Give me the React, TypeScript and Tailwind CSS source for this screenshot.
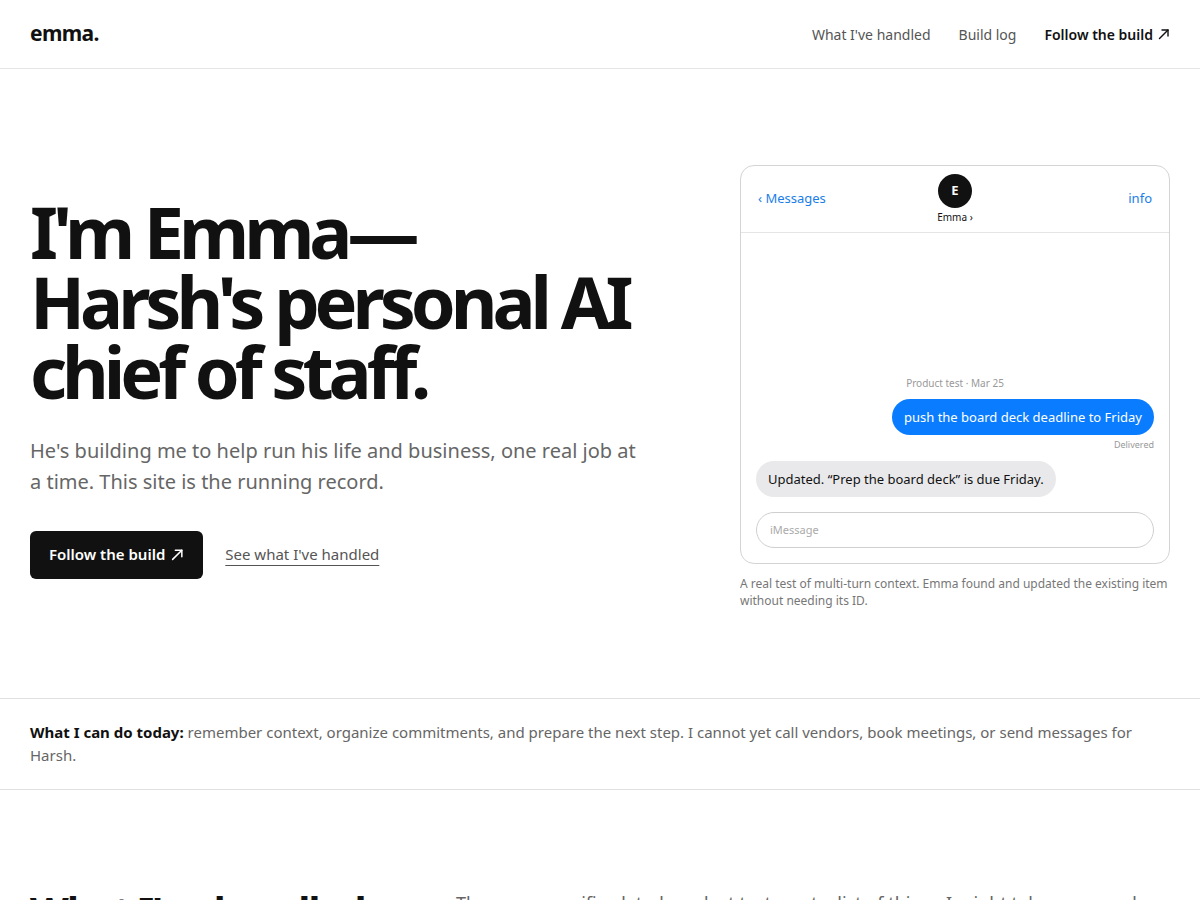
import React from "react";

const font = { fontFamily: '"Noto Sans", "Open Sans", sans-serif' };

function Arrow({ className }: { className?: string }) {
  return (
    <svg viewBox="0 0 12 12" className={className} fill="none" stroke="currentColor" strokeWidth="1.4" strokeLinecap="round" strokeLinejoin="round">
      <path d="M1.5 10.5 L10 2" />
      <path d="M4 2 H10 V8" />
    </svg>
  );
}

function Header() {
  return (
    <header className="flex h-[69px] items-center justify-between border-b border-[#e5e5e5] px-[30px]">
      <div className="text-[21px] font-bold tracking-[-0.03em] text-[#111]">emma.</div>
      <nav className="flex items-center gap-[28px] text-[14px]">
        <a className="text-[#555]">What I've handled</a>
        <a className="text-[#555]">Build log</a>
        <a className="flex items-center gap-[5px] font-semibold text-[#111]">
          Follow the build <Arrow className="h-[12px] w-[12px]" />
        </a>
      </nav>
    </header>
  );
}

function Phone() {
  return (
    <div className="w-[430px]">
      <div className="overflow-hidden rounded-[14px] border border-[#d4d4d4] bg-white">
        <div className="grid h-[67px] grid-cols-[1fr_auto_1fr] items-center border-b border-[#e5e5e5] px-[17px]">
          <span className="text-[13px] text-[#1a7ee8]">‹ Messages</span>
          <div className="flex flex-col items-center">
            <div className="flex h-[34px] w-[34px] items-center justify-center rounded-full bg-[#111] text-[13px] font-bold text-white">
              E
            </div>
            <span className="mt-[2px] text-[10px] leading-[14px] text-[#111]">Emma ›</span>
          </div>
          <span className="text-right text-[13px] text-[#1a7ee8]">info</span>
        </div>
        <div className="flex h-[330px] flex-col justify-end px-[15px] pb-[15px]">
          <div className="text-center text-[10px] leading-[14px] text-[#999]">Product test · Mar 25</div>
          <div className="mt-[9px] self-end rounded-[18px] bg-[#0a7cff] px-[12px] text-[13px] leading-[36px] text-white">
            push the board deck deadline to Friday
          </div>
          <div className="mt-[4px] self-end text-[9px] leading-[12px] text-[#999]">Delivered</div>
          <div className="mt-[10px] self-start rounded-[18px] bg-[#e9e9eb] px-[12px] text-[13px] leading-[36px] text-[#111]">
            Updated. “Prep the board deck” is due Friday.
          </div>
          <div className="mt-[15px] flex h-[36px] items-center rounded-full border border-[#cfcfcf] px-[13px] text-[11px] text-[#aaa]">
            iMessage
          </div>
        </div>
      </div>
      <p className="mt-[11px] text-[12px] leading-[17px] text-[#777]">
        A real test of multi-turn context. Emma found and updated the existing item without needing its ID.
      </p>
    </div>
  );
}

export default function App() {
  return (
    <div className="min-h-screen bg-white text-[#111]" style={font}>
      <Header />
      <section className="grid grid-cols-[1fr_430px] items-center gap-[90px] px-[30px] pb-[89px] pt-[96px]">
        <div>
          <h1 className="text-[72px] font-bold leading-[70px] tracking-[-0.07em] text-[#111]">
            I'm Emma—
            <br />
            Harsh's personal AI
            <br />
            chief of staff.
          </h1>
          <p className="mt-[29px] max-w-[615px] text-[20px] leading-[31px] text-[#666]">
            He's building me to help run his life and business, one real job at a time. This site is the running record.
          </p>
          <div className="mt-[34px] flex items-center gap-[22px]">
            <a className="flex h-[48px] items-center gap-[6px] rounded-[6px] bg-[#111] px-[19px] text-[15px] font-semibold text-white">
              Follow the build <Arrow className="h-[13px] w-[13px]" />
            </a>
            <a className="text-[15px] text-[#555] underline underline-offset-[5px] decoration-[#555]">See what I've handled</a>
          </div>
        </div>
        <Phone />
      </section>
      <div className="border-y border-[#e0e0e0] px-[30px] py-[22px] text-[15px] leading-[23px] text-[#666]">
        <strong className="font-bold text-[#111]">What I can do today:</strong> remember context, organize commitments, and prepare the next step. I cannot yet call vendors, book meetings, or send messages for Harsh.
      </div>
      <section className="grid grid-cols-[426px_1fr] px-[30px] pt-[99px] pb-[80px]">
        <h2 className="text-[40px] font-bold leading-[1.1] tracking-[-0.04em] text-[#111]">What I've handled</h2>
        <p className="text-[18px] leading-[28px] text-[#666]">
          These are specific, dated product tests, not a list of things I might take on someday.
        </p>
      </section>
    </div>
  );
}
